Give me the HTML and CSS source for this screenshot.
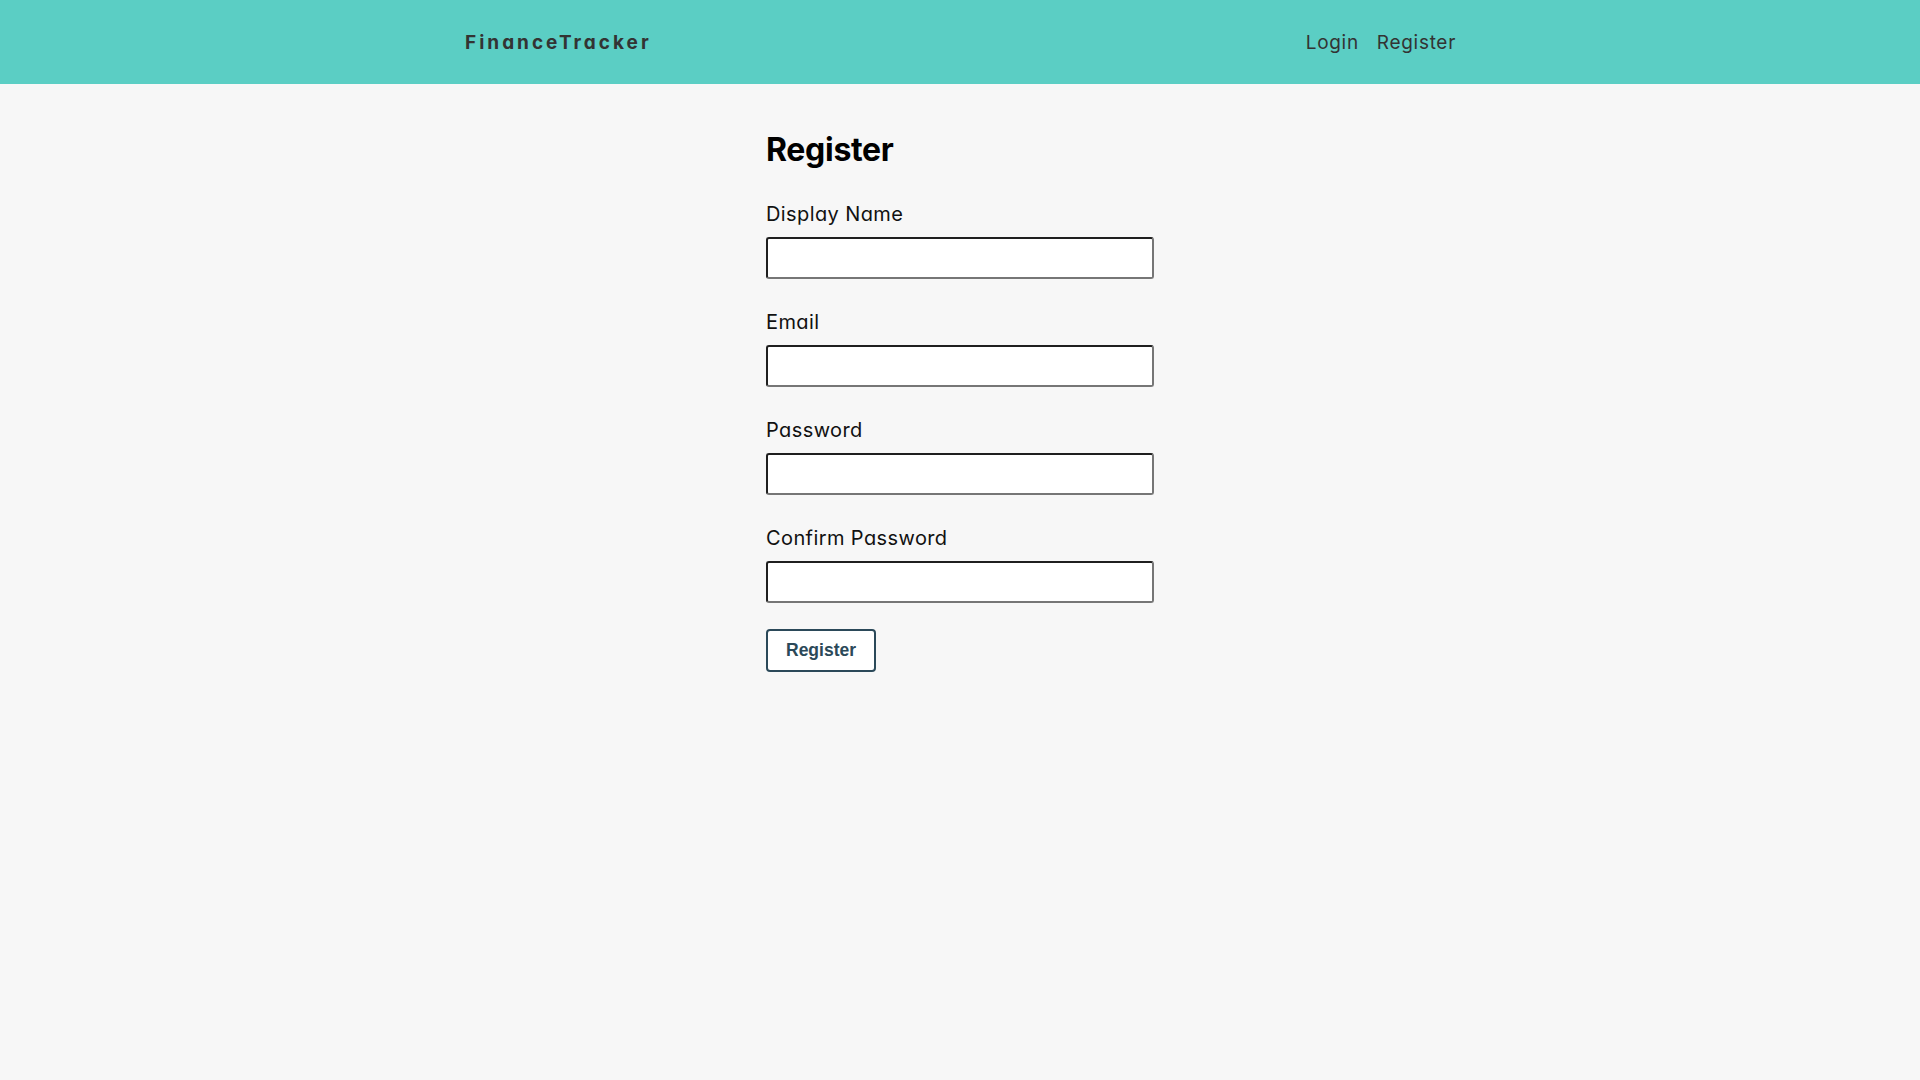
FILE: index.html
```html
<!DOCTYPE html>
<html lang="en">
<head>
<meta charset="utf-8">
<title>Register - FinanceTracker</title>
<link rel="stylesheet" href="styles.css">
</head>
<body>
<header class="topbar">
  <div class="topbar-inner">
    <a class="brand" href="#">FinanceTracker</a>
    <nav class="nav">
      <a class="nav-link" href="#">Login</a>
      <a class="nav-link" href="#">Register</a>
    </nav>
  </div>
</header>
<main class="page">
  <form class="auth-form">
    <h1 class="form-title">Register</h1>
    <div class="field">
      <label class="field-label" for="name">Display Name</label>
      <input class="field-input" id="name" type="text">
    </div>
    <div class="field">
      <label class="field-label" for="email">Email</label>
      <input class="field-input" id="email" type="email">
    </div>
    <div class="field">
      <label class="field-label" for="password">Password</label>
      <input class="field-input" id="password" type="password">
    </div>
    <div class="field">
      <label class="field-label" for="confirm">Confirm Password</label>
      <input class="field-input" id="confirm" type="password">
    </div>
    <button class="submit-btn" type="button">Register</button>
  </form>
</main>
</body>
</html>
```

FILE: styles.css
```css
* { box-sizing: border-box; }

html, body {
  margin: 0;
  padding: 0;
}

body {
  background: #f7f7f7;
  font-family: Inter, "Noto Sans", sans-serif;
  font-feature-settings: "cv11";
  color: #111;
  min-height: 100vh;
}

.topbar {
  background: #5bcec4;
  height: 84px;
}

.topbar-inner {
  max-width: 1024px;
  height: 100%;
  margin: 0 auto;
  padding: 0 16px;
  display: flex;
  align-items: center;
  justify-content: space-between;
}

.brand {
  margin-left: 1px;
  font-size: 19px;
  font-weight: 700;
  letter-spacing: 3px;
  color: #333;
  text-decoration: none;
}

.nav {
  display: flex;
  gap: 18px;
}

.nav-link {
  font-size: 19px;
  letter-spacing: 0.7px;
  color: #333;
  text-decoration: none;
}

.page {
  padding-top: 46px;
}

.auth-form {
  width: 388px;
  margin: 0 auto;
}

.form-title {
  margin: 0 0 32px;
  font-size: 32px;
  line-height: 40px;
  font-weight: 700;
  letter-spacing: -0.3px;
  color: #000;
}

.field {
  margin-bottom: 31px;
}

.field-label {
  display: block;
  font-size: 20px;
  line-height: 24px;
  letter-spacing: 0.4px;
  margin-bottom: 11px;
  color: #111;
}

.field-input {
  display: block;
  width: 100%;
  height: 42px;
  background: #fff;
  border: 2px solid;
  border-color: #1f1f1f #767676 #767676 #1f1f1f;
  border-radius: 3px;
  font: inherit;
  padding: 0 8px;
}

.submit-btn {
  margin-top: -5px;
  height: 43px;
  padding: 0 18px;
  background: #fff;
  border: 2px solid #2b4959;
  border-radius: 4px;
  color: #2b4959;
  font-family: "Liberation Sans", Arial, sans-serif;
  font-size: 17.5px;
  font-weight: 700;
  cursor: pointer;
}
```
